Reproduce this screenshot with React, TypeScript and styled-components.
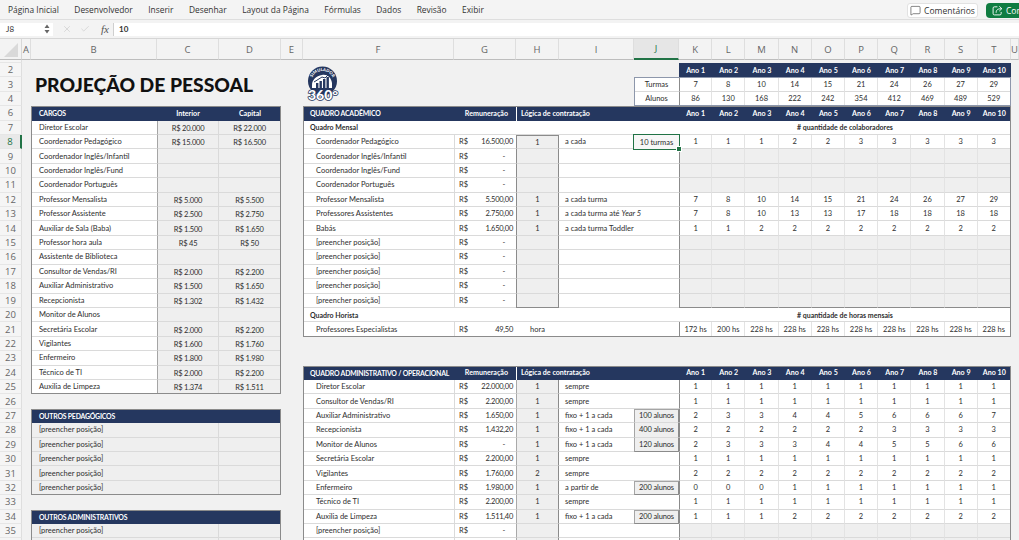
import React from "react";
import styled, { createGlobalStyle, css } from "styled-components";
import { X, Check, MessageSquare } from "lucide-react";

const NAVY = "#25375f";
const GREEN = "#217346";
const PAPER = "#f1f1f1";
const INPUT = "#efefef";
const HAIR = "#dadada";
const DARK = "#8b8b8b";

const Global = createGlobalStyle`
  html, body { margin: 0; padding: 0; background: ${PAPER}; }
  #root { width: 1019px; height: 540px; overflow: hidden; }
`;

const Page = styled.div`
  width: 1019px;
  height: 540px;
  overflow: hidden;
  display: flex;
  flex-direction: column;
  background: ${PAPER};
  font-family: "Lato", "Liberation Sans", sans-serif;
`;

const Ribbon = styled.div`
  height: 20px;
  flex: none;
  display: flex;
  align-items: center;
  justify-content: space-between;
  padding: 0 0 0 8px;
  background: #f4f4f4;
  border-bottom: 1px solid #dedede;
  box-sizing: border-box;
`;
const Tabs = styled.nav`
  display: flex;
  gap: 15.5px;
`;
const Tab = styled.span`
  font-family: "Open Sans", sans-serif;
  font-size: 8.4px;
  color: #333;
  line-height: 14px;
`;
const RibbonActions = styled.div`
  display: flex;
  gap: 8px;
  width: 112px;
  overflow: hidden;
  flex: none;
  padding-top: 1px;
  justify-content: flex-start;
`;
const CommentButton = styled.button`
  flex: none;
  width: 71px;
  height: 15px;
  padding: 0;
  display: flex;
  align-items: center;
  justify-content: center;
  gap: 3px;
  font-family: "Open Sans", sans-serif;
  font-size: 8.5px;
  color: #333;
  background: #fff;
  border: 1px solid #e2e2e2;
  border-radius: 3px;
`;
const ShareButton = styled.button`
  flex: none;
  width: 84px;
  height: 15px;
  padding: 0 0 0 6px;
  display: flex;
  align-items: center;
  gap: 3px;
  font-family: "Open Sans", sans-serif;
  font-size: 8.5px;
  color: #fff;
  background: #107c41;
  border: none;
  border-radius: 4px;
`;

const FormulaBar = styled.div`
  height: 19px;
  flex: none;
  display: flex;
  align-items: center;
  background: #f3f3f3;
  border-bottom: 1px solid #d6d6d6;
  box-sizing: border-box;
`;
const NameBox = styled.div`
  width: 53px;
  height: 13px;
  flex: none;
  display: flex;
  align-items: center;
  justify-content: space-between;
  padding: 0 3px 0 6px;
  box-sizing: border-box;
  background: #fff;
  font-size: 8px;
  color: #333;
`;
const FormulaTools = styled.div`
  width: 60px;
  flex: none;
  display: flex;
  align-items: center;
  justify-content: flex-end;
  gap: 8px;
  padding-right: 4px;
  box-sizing: border-box;
  color: #c4c4c4;
`;
const Fx = styled.i`
  font-family: "Liberation Serif", serif;
  font-size: 11px;
  color: #555;
  margin-left: 3px;
`;
const FormulaInput = styled.div`
  flex: 1;
  height: 13px;
  display: flex;
  align-items: center;
  padding-left: 5px;
  background: #fff;
  border-left: 1px solid #cfcfcf;
  font-size: 8px;
  font-weight: 700;
  color: #333;
`;

const Sheet = styled.div`
  flex: 1;
  min-height: 0;
  display: grid;
  grid-template-columns: 22px 9px 126px 62px 62px 22px 151px 62px 43px 75px 45px repeat(10, 33.2px) 8px;
  grid-template-rows: 21px 3px repeat(3, 14.41px) 0 repeat(31, 14.41px);
  font-size: 7.5px;
  color: #2e2e2e;
  overflow: hidden;
`;

type Place = { $c: number | string; $r: number | string };

const placed = css<Place>`
  grid-column: ${(p) => p.$c};
  grid-row: ${(p) => p.$r};
  min-width: 0;
  box-sizing: border-box;
  white-space: nowrap;
`;

const Corner = styled.div`
  grid-column: 1;
  grid-row: 1;
  position: relative;
  background: #f3f3f3;
  border-right: 1px solid #d8d8d8;
  border-bottom: 1px solid #bdbdbd;
  &::after {
    content: "";
    position: absolute;
    right: 3px;
    bottom: 2px;
    width: 14px;
    height: 14px;
    background: #d9d9d9;
    clip-path: polygon(100% 0, 100% 100%, 0 100%);
  }
`;
const ColHead = styled.div<Place & { $on?: boolean }>`
  ${placed};
  display: flex;
  align-items: center;
  justify-content: center;
  font-family: "Open Sans", sans-serif;
  font-size: 9.5px;
  color: ${(p) => (p.$on ? GREEN : "#666")};
  background: ${(p) => (p.$on ? "#e6e6e6" : "#f3f3f3")};
  border-right: 1px solid #dedede;
  border-bottom: ${(p) => (p.$on ? `2px solid ${GREEN}` : "1px solid #bdbdbd")};
`;
const RowHead = styled.div<Place & { $on?: boolean }>`
  ${placed};
  display: flex;
  align-items: center;
  justify-content: center;
  overflow: hidden;
  font-family: "Open Sans", sans-serif;
  font-size: 9.5px;
  color: ${(p) => (p.$on ? GREEN : "#666")};
  background: ${(p) => (p.$on ? "#e9e9e9" : "#f5f5f5")};
  border-right: ${(p) => (p.$on ? `2px solid ${GREEN}` : "1px solid #dedede")};
  border-bottom: 1px solid #e6e6e6;
`;

const Title = styled.h1<Place>`
  ${placed};
  margin: 0;
  padding-left: 4px;
  display: flex;
  align-items: center;
  font-size: 19.3px;
  font-weight: 900;
  color: #111;
`;
const LogoSlot = styled.div<Place>`
  ${placed};
  padding: 3px 0 0 4px;
  display: flex;
`;

const Band = styled.div<Place & { $align?: string; $pad?: number; $split?: boolean; $caps?: boolean; $endPad?: number }>`
  ${placed};
  display: flex;
  align-items: center;
  justify-content: ${(p) => p.$align ?? "center"};
  padding-left: ${(p) => p.$pad ?? 0}px;
  padding-right: ${(p) => p.$endPad ?? 0}px;
  background: ${NAVY};
  color: #fff;
  font-weight: 700;
  font-size: ${(p) => (p.$caps ? 6.9 : 7.1)}px;
  letter-spacing: ${(p) => (p.$caps ? -0.2 : 0)}px;
  border-left: ${(p) => (p.$split ? "1px solid #fff" : "none")};
`;

const Label = styled.div<Place & { $grey?: boolean; $indent?: number; $bold?: boolean }>`
  ${placed};
  display: flex;
  align-items: center;
  padding-left: ${(p) => p.$indent ?? 8}px;
  background: ${(p) => (p.$grey ? INPUT : "#fff")};
  font-weight: ${(p) => (p.$bold ? 700 : 400)};
  font-size: ${(p) => (p.$bold ? 7 : 7.5)}px;
  border-bottom: 1px solid ${HAIR};
`;
const Sub = styled.div<Place>`
  ${placed};
  background: #fff;
  display: flex;
  align-items: center;
  justify-content: center;
  font-weight: 700;
  font-size: 7px;
  border-bottom: 1px solid ${HAIR};
`;
const TopLabel = styled.div<Place>`
  ${placed};
  background: #fff;
  display: flex;
  align-items: center;
  justify-content: center;
  border-bottom: 1px solid ${HAIR};
`;

const Wage = styled.div<Place & { $first?: boolean }>`
  ${placed};
  display: flex;
  align-items: center;
  justify-content: center;
  padding-top: 2px;
  background: ${INPUT};
  letter-spacing: -0.2px;
  border-right: 1px solid ${HAIR};
  border-bottom: 1px solid ${HAIR};
  border-left: ${(p) => (p.$first ? "1px solid #a5a5a5" : "none")};
`;

const Money = styled.div<Place>`
  ${placed};
  display: flex;
  align-items: center;
  justify-content: space-between;
  padding: 0 3px 0 4px;
  background: #fff;
  border-left: 1px solid ${HAIR};
  border-bottom: 1px solid ${HAIR};
`;
const Amount = styled.span<{ $dash?: boolean }>`
  letter-spacing: -0.25px;
  margin-right: ${(p) => (p.$dash ? 8 : 0)}px;
`;
const Count = styled.div<Place & { $plain?: boolean; $strongLeft?: boolean; $top?: boolean; $end?: boolean }>`
  ${placed};
  display: flex;
  align-items: center;
  justify-content: center;
  background: ${(p) => (p.$plain ? "#fff" : INPUT)};
  border-bottom: 1px solid ${(p) => (p.$end ? DARK : HAIR)};
  border-top: ${(p) => (p.$top ? `1px solid ${DARK}` : "none")};
  ${(p) =>
    !p.$plain &&
    css`
      border-right: 1.5px solid ${DARK};
      border-left: 1px solid ${p.$strongLeft ? DARK : "#a9a9a9"};
    `}
`;
const Logic = styled.div<Place>`
  ${placed};
  display: flex;
  align-items: center;
  padding-left: 6px;
  background: #fff;
  border-bottom: 1px solid ${HAIR};
  em { font-style: italic; margin-left: 2px; }
`;
const Param = styled.div<Place & { $open?: boolean; $close?: boolean }>`
  ${placed};
  display: flex;
  align-items: center;
  justify-content: center;
  background: ${INPUT};
  letter-spacing: -0.15px;
  border-left: 1px solid #a5a5a5;
  border-right: 1px solid ${DARK};
  border-top: ${(p) => (p.$open ? "1px solid #a5a5a5" : "none")};
  border-bottom: 1px solid ${(p) => (p.$close ? DARK : HAIR)};
`;
const Year = styled.div<Place & { $grey?: boolean; $first?: boolean; $end?: boolean }>`
  ${placed};
  display: flex;
  align-items: center;
  justify-content: center;
  background: ${(p) => (p.$grey ? INPUT : "#fff")};
  border-right: 1px solid #e3e3e3;
  border-bottom: 1px solid ${(p) => (p.$end ? DARK : HAIR)};
  border-left: ${(p) => (p.$first ? `1px solid ${DARK}` : "none")};
`;
const Frame = styled.div<Place & { $color?: string }>`
  ${placed};
  border: 1px solid ${(p) => p.$color ?? DARK};
  pointer-events: none;
  z-index: 2;
`;
const Selection = styled.div<Place>`
  ${placed};
  position: relative;
  margin: -1px -1px -1px -1px;
  display: flex;
  align-items: center;
  justify-content: center;
  background: #f7f7f7;
  border: 1.5px solid ${GREEN};
  z-index: 3;
  &::after {
    content: "";
    position: absolute;
    right: -3px;
    bottom: -3px;
    width: 4px;
    height: 4px;
    background: ${GREEN};
    border: 0.5px solid #fff;
  }
`;

const COLUMN = { A: 2, B: 3, C: 4, D: 5, E: 6, F: 7, G: 8, H: 9, I: 10, J: 11, K: 12, T: 21, U: 22 };
const LETTERS = "ABCDEFGHIJKLMNOPQRSTU".split("");
const line = (row: number) => row + 1;
const yearCol = (i: number) => COLUMN.K + i;
const span = (from: number, to: number) => `${from} / ${to + 1}`;
const rowSpan = (from: number, to: number) => `${line(from)} / ${line(to) + 1}`;

const YEARS = Array.from({ length: 10 }, (_, i) => `Ano ${i + 1}`);
const ROWS = [1, 2, 3, 4, ...Array.from({ length: 31 }, (_, i) => i + 6)];

const CARGOS: [number, string, string?, string?][] = [
  [7, "Diretor Escolar", "R$ 20.000", "R$ 22.000"],
  [8, "Coordenador Pedagógico", "R$ 15.000", "R$ 16.500"],
  [9, "Coordenador Inglês/Infantil"],
  [10, "Coordenador Inglês/Fund"],
  [11, "Coordenador Português"],
  [12, "Professor Mensalista", "R$ 5.000", "R$ 5.500"],
  [13, "Professor Assistente", "R$ 2.500", "R$ 2.750"],
  [14, "Auxiliar de Sala (Baba)", "R$ 1.500", "R$ 1.650"],
  [15, "Professor hora aula", "R$ 45", "R$ 50"],
  [16, "Assistente de Biblioteca"],
  [17, "Consultor de Vendas/RI", "R$ 2.000", "R$ 2.200"],
  [18, "Auxiliar Administrativo", "R$ 1.500", "R$ 1.650"],
  [19, "Recepcionista", "R$ 1.302", "R$ 1.432"],
  [20, "Monitor de Alunos"],
  [21, "Secretária Escolar", "R$ 2.000", "R$ 2.200"],
  [22, "Vigilantes", "R$ 1.600", "R$ 1.760"],
  [23, "Enfermeiro", "R$ 1.800", "R$ 1.980"],
  [24, "Técnico de TI", "R$ 2.000", "R$ 2.200"],
  [25, "Auxilia de Limpeza", "R$ 1.374", "R$ 1.511"],
];
const BLANKS = [28, 29, 30, 31, 32, 35, 36];
const LAST_VISIBLE = 35;

type StaffRow = {
  row: number;
  name: string;
  wage: string;
  count?: string;
  logic?: React.ReactNode;
  param?: string;
  open?: boolean;
  close?: boolean;
  years?: (number | string)[];
};

const rep = (v: number) => Array(10).fill(v) as number[];

const ACADEMIC: StaffRow[] = [
  { row: 8, name: "Coordenador Pedagógico", wage: "16.500,00", count: "1", logic: "a cada", years: [1, 1, 1, 2, 2, 3, 3, 3, 3, 3] },
  { row: 9, name: "Coordenador Inglês/Infantil", wage: "-" },
  { row: 10, name: "Coordenador Inglês/Fund", wage: "-" },
  { row: 11, name: "Coordenador Português", wage: "-" },
  { row: 12, name: "Professor Mensalista", wage: "5.500,00", count: "1", logic: "a cada turma", years: [7, 8, 10, 14, 15, 21, 24, 26, 27, 29] },
  { row: 13, name: "Professores Assistentes", wage: "2.750,00", count: "1", logic: <>a cada turma até <em>Year 5</em></>, years: [7, 8, 10, 13, 13, 17, 18, 18, 18, 18] },
  { row: 14, name: "Babás", wage: "1.650,00", count: "1", logic: "a cada turma Toddler", years: [1, 1, 2, 2, 2, 2, 2, 2, 2, 2] },
  { row: 15, name: "[preencher posição]", wage: "-" },
  { row: 16, name: "[preencher posição]", wage: "-" },
  { row: 17, name: "[preencher posição]", wage: "-" },
  { row: 18, name: "[preencher posição]", wage: "-" },
  { row: 19, name: "[preencher posição]", wage: "-" },
];

const ADMIN: StaffRow[] = [
  { row: 25, name: "Diretor Escolar", wage: "22.000,00", count: "1", logic: "sempre", years: rep(1) },
  { row: 26, name: "Consultor de Vendas/RI", wage: "2.200,00", count: "1", logic: "sempre", years: rep(1) },
  { row: 27, name: "Auxiliar Administrativo", wage: "1.650,00", count: "1", logic: "fixo + 1 a cada", param: "100 alunos", open: true, years: [2, 3, 3, 4, 4, 5, 6, 6, 6, 7] },
  { row: 28, name: "Recepcionista", wage: "1.432,20", count: "1", logic: "fixo + 1 a cada", param: "400 alunos", years: [2, 2, 2, 2, 2, 2, 3, 3, 3, 3] },
  { row: 29, name: "Monitor de Alunos", wage: "-", count: "1", logic: "fixo + 1 a cada", param: "120 alunos", close: true, years: [2, 3, 3, 3, 4, 4, 5, 5, 6, 6] },
  { row: 30, name: "Secretária Escolar", wage: "2.200,00", count: "1", logic: "sempre", years: rep(1) },
  { row: 31, name: "Vigilantes", wage: "1.760,00", count: "2", logic: "sempre", years: rep(2) },
  { row: 32, name: "Enfermeiro", wage: "1.980,00", count: "1", logic: "a partir de", param: "200 alunos", open: true, close: true, years: [0, 0, 0, 1, 1, 1, 1, 1, 1, 1] },
  { row: 33, name: "Técnico de TI", wage: "2.200,00", count: "1", logic: "sempre", years: rep(1) },
  { row: 34, name: "Auxilia de Limpeza", wage: "1.511,40", count: "1", logic: "fixo + 1 a cada", param: "200 alunos", open: true, close: true, years: [1, 1, 1, 2, 2, 2, 2, 2, 2, 2] },
  { row: 35, name: "[preencher posição]", wage: "-" },
  { row: 36, name: "", wage: "" },
];

const TURMAS = [7, 8, 10, 14, 15, 21, 24, 26, 27, 29];
const ALUNOS = [86, 130, 168, 222, 242, 354, 412, 469, 489, 529];
const HOURS = ["172 hs", "200 hs", ...Array(8).fill("228 hs")];

const ShareIcon = () => (
  <svg width="11" height="11" viewBox="0 0 12 12" fill="none" stroke="#fff" strokeWidth="1" strokeLinecap="round" strokeLinejoin="round">
    <path d="M5.5 2H2.6A1.4 1.4 0 0 0 1.2 3.4v6A1.4 1.4 0 0 0 2.6 10.8h6a1.4 1.4 0 0 0 1.4-1.4V8" />
    <path d="M4.5 8c0-2.8 1.9-4 5.8-4" />
    <path d="M8.3 1.7 10.7 4 8.3 6.3" />
  </svg>
);

const Logo = () => (
  <svg width="34" height="36" viewBox="0 0 34 36" aria-label="Simulador 360">
    <circle cx="15.5" cy="15" r="14.5" fill={NAVY} />
    <defs>
      <path id="logoArc" d="M4.5 16 A11 11 0 0 1 26.5 16" />
    </defs>
    <text fill="#fff" fontFamily="Lato, sans-serif" fontWeight="900" fontSize="4.2">
      <textPath href="#logoArc" startOffset="50%" textAnchor="middle">SIMULADOR</textPath>
    </text>
    <path d="M5 19 C5 14 9 10 15 9 C20 8 24 11 25 17 L25 22 L5 22 Z" fill="#fff" />
    <g fill={NAVY}>
      <rect x="9" y="17" width="2.4" height="5" />
      <rect x="12.5" y="15" width="2.4" height="7" />
      <rect x="16" y="13" width="2.4" height="9" />
      <rect x="19.5" y="11" width="2.4" height="11" />
    </g>
    <path d="M7 16 L15 11 L18 12 L22 8" stroke={NAVY} strokeWidth="1" fill="none" />
    <text
      x="16"
      y="34"
      textAnchor="middle"
      fontFamily="Lato, sans-serif"
      fontWeight="900"
      fontSize="14"
      fill="#fff"
      stroke={NAVY}
      strokeWidth="1.6"
      paintOrder="stroke"
    >
      360°
    </text>
  </svg>
);

const StaffTable = ({ rows, admin }: { rows: StaffRow[]; admin?: boolean }) => (
  <>
    {rows.map((s, idx) => (
      <React.Fragment key={s.row}>
        <Label $c={COLUMN.F} $r={line(s.row)} $indent={13}>{s.name}</Label>
        <Money $c={COLUMN.G} $r={line(s.row)}>
          {s.wage && <span>R$</span>}
          <Amount $dash={s.wage === "-"}>{s.wage}</Amount>
        </Money>
        <Count
          $c={COLUMN.H}
          $r={line(s.row)}
          $strongLeft={!admin}
          $top={!admin && idx === 0}
          $end={!admin && idx === rows.length - 1}
        >
          {s.count}
        </Count>
        {s.param ? (
          <>
            <Logic $c={COLUMN.I} $r={line(s.row)}>{s.logic}</Logic>
            <Param $c={COLUMN.J} $r={line(s.row)} $open={s.open} $close={s.close}>{s.param}</Param>
          </>
        ) : (
          <Logic $c={span(COLUMN.I, COLUMN.J)} $r={line(s.row)}>{s.logic}</Logic>
        )}
        {YEARS.map((_, i) => (
          <Year
            key={i}
            $c={yearCol(i)}
            $r={line(s.row)}
            $grey={!s.years}
            $first={i === 0}
            $end={!admin && idx === rows.length - 1}
          >
            {s.years?.[i]}
          </Year>
        ))}
      </React.Fragment>
    ))}
  </>
);

export default function App() {
  return (
    <Page>
      <Global />
      <Ribbon>
        <Tabs>
          {["Página Inicial", "Desenvolvedor", "Inserir", "Desenhar", "Layout da Página", "Fórmulas", "Dados", "Revisão", "Exibir"].map((t) => (
            <Tab key={t}>{t}</Tab>
          ))}
        </Tabs>
        <RibbonActions>
          <CommentButton>
            <MessageSquare size={11} strokeWidth={1.3} />
            Comentários
          </CommentButton>
          <ShareButton>
            <ShareIcon />
            Compartilhar
          </ShareButton>
        </RibbonActions>
      </Ribbon>

      <FormulaBar>
        <NameBox>
          J8
          <svg width="6" height="10" viewBox="0 0 6 10">
            <path d="M3 0.5 L5.5 4 H0.5 Z M3 9.5 L0.5 6 H5.5 Z" fill="#666" />
          </svg>
        </NameBox>
        <FormulaTools>
          <X size={10} strokeWidth={1.4} />
          <Check size={10} strokeWidth={1.4} />
          <Fx>fx</Fx>
        </FormulaTools>
        <FormulaInput>10</FormulaInput>
      </FormulaBar>

      <Sheet>
        <Corner />
        {LETTERS.map((l, i) => (
          <ColHead key={l} $c={i + 2} $r={1} $on={l === "J"}>{l}</ColHead>
        ))}
        {ROWS.map((r) => (
          <RowHead key={r} $c={1} $r={line(r)} $on={r === 8}>
            {r > 1 && r <= LAST_VISIBLE ? r : ""}
          </RowHead>
        ))}

        <Title $c={span(COLUMN.B, COLUMN.E)} $r={rowSpan(2, 4)}>PROJEÇÃO DE PESSOAL</Title>
        <LogoSlot $c={COLUMN.F} $r={rowSpan(2, 4)}><Logo /></LogoSlot>

        {/* Turmas / alunos */}
        {YEARS.map((y, i) => (
          <Band key={y} $c={yearCol(i)} $r={line(2)}>{y}</Band>
        ))}
        <TopLabel $c={COLUMN.J} $r={line(3)}>Turmas</TopLabel>
        <TopLabel $c={COLUMN.J} $r={line(4)}>Alunos</TopLabel>
        {TURMAS.map((v, i) => (
          <Year key={i} $c={yearCol(i)} $r={line(3)} $first={i === 0}>{v}</Year>
        ))}
        {ALUNOS.map((v, i) => (
          <Year key={i} $c={yearCol(i)} $r={line(4)} $first={i === 0}>{v}</Year>
        ))}
        <Frame $c={span(COLUMN.J, COLUMN.T)} $r={rowSpan(3, 4)} $color="#8d97ab" />

        {/* Cargos */}
        <Band $c={COLUMN.B} $r={line(6)} $align="flex-start" $pad={8} $caps>CARGOS</Band>
        <Band $c={COLUMN.C} $r={line(6)}>Interior</Band>
        <Band $c={COLUMN.D} $r={line(6)}>Capital</Band>
        {CARGOS.map(([r, n, a, b]) => (
          <React.Fragment key={r}>
            <Label $c={COLUMN.B} $r={line(r)}>{n}</Label>
            <Wage $c={COLUMN.C} $r={line(r)} $first>{a}</Wage>
            <Wage $c={COLUMN.D} $r={line(r)}>{b}</Wage>
          </React.Fragment>
        ))}
        <Frame $c={span(COLUMN.B, COLUMN.D)} $r={rowSpan(6, 25)} />

        <Band $c={span(COLUMN.B, COLUMN.D)} $r={line(27)} $align="flex-start" $pad={8} $caps>OUTROS PEDAGÓGICOS</Band>
        <Band $c={span(COLUMN.B, COLUMN.D)} $r={line(34)} $align="flex-start" $pad={8} $caps>OUTROS ADMINISTRATIVOS</Band>
        {BLANKS.map((r) => (
          <React.Fragment key={r}>
            <Label $c={COLUMN.B} $r={line(r)} $grey>{r <= LAST_VISIBLE ? "[preencher posição]" : ""}</Label>
            <Wage $c={COLUMN.C} $r={line(r)} />
            <Wage $c={COLUMN.D} $r={line(r)} />
          </React.Fragment>
        ))}
        <Frame $c={span(COLUMN.B, COLUMN.D)} $r={rowSpan(27, 32)} />
        <Frame $c={span(COLUMN.B, COLUMN.D)} $r={rowSpan(34, 37)} />

        {/* Quadro acadêmico */}
        <Band $c={COLUMN.F} $r={line(6)} $align="flex-start" $pad={7} $caps>QUADRO ACADÊMICO</Band>
        <Band $c={COLUMN.G} $r={line(6)} $align="flex-end" $endPad={8}>Remuneração</Band>
        <Band $c={span(COLUMN.H, COLUMN.J)} $r={line(6)} $align="flex-start" $pad={4} $split>Lógica de contratação</Band>
        {YEARS.map((y, i) => (
          <Band key={y} $c={yearCol(i)} $r={line(6)}>{y}</Band>
        ))}
        <Label $c={span(COLUMN.F, COLUMN.J)} $r={line(7)} $indent={7} $bold>Quadro Mensal</Label>
        <Sub $c={span(COLUMN.K, COLUMN.T)} $r={line(7)}># quantidade de colaboradores</Sub>
        <StaffTable rows={ACADEMIC} />
        <Selection $c={COLUMN.J} $r={line(8)}>10 turmas</Selection>
        <Label $c={span(COLUMN.F, COLUMN.J)} $r={line(20)} $indent={7} $bold>Quadro Horista</Label>
        <Sub $c={span(COLUMN.K, COLUMN.T)} $r={line(20)}># quantidade de horas mensais</Sub>
        <Label $c={COLUMN.F} $r={line(21)} $indent={13}>Professores Especialistas</Label>
        <Money $c={COLUMN.G} $r={line(21)}>
          <span>R$</span>
          <Amount>49,50</Amount>
        </Money>
        <Count $c={COLUMN.H} $r={line(21)} $plain>hora</Count>
        <Logic $c={span(COLUMN.I, COLUMN.J)} $r={line(21)} />
        {HOURS.map((h, i) => (
          <Year key={i} $c={yearCol(i)} $r={line(21)} $first={i === 0}>{h}</Year>
        ))}
        <Frame $c={span(COLUMN.F, COLUMN.T)} $r={rowSpan(6, 21)} />

        {/* Quadro administrativo */}
        <Band $c={COLUMN.F} $r={line(24)} $align="flex-start" $pad={7} $caps>QUADRO ADMINISTRATIVO / OPERACIONAL</Band>
        <Band $c={COLUMN.G} $r={line(24)} $align="flex-end" $endPad={8}>Remuneração</Band>
        <Band $c={span(COLUMN.H, COLUMN.J)} $r={line(24)} $align="flex-start" $pad={4} $split>Lógica de contratação</Band>
        {YEARS.map((y, i) => (
          <Band key={y} $c={yearCol(i)} $r={line(24)}>{y}</Band>
        ))}
        <StaffTable rows={ADMIN} admin />
        <Frame $c={span(COLUMN.F, COLUMN.T)} $r={rowSpan(24, 37)} />
      </Sheet>
    </Page>
  );
}
